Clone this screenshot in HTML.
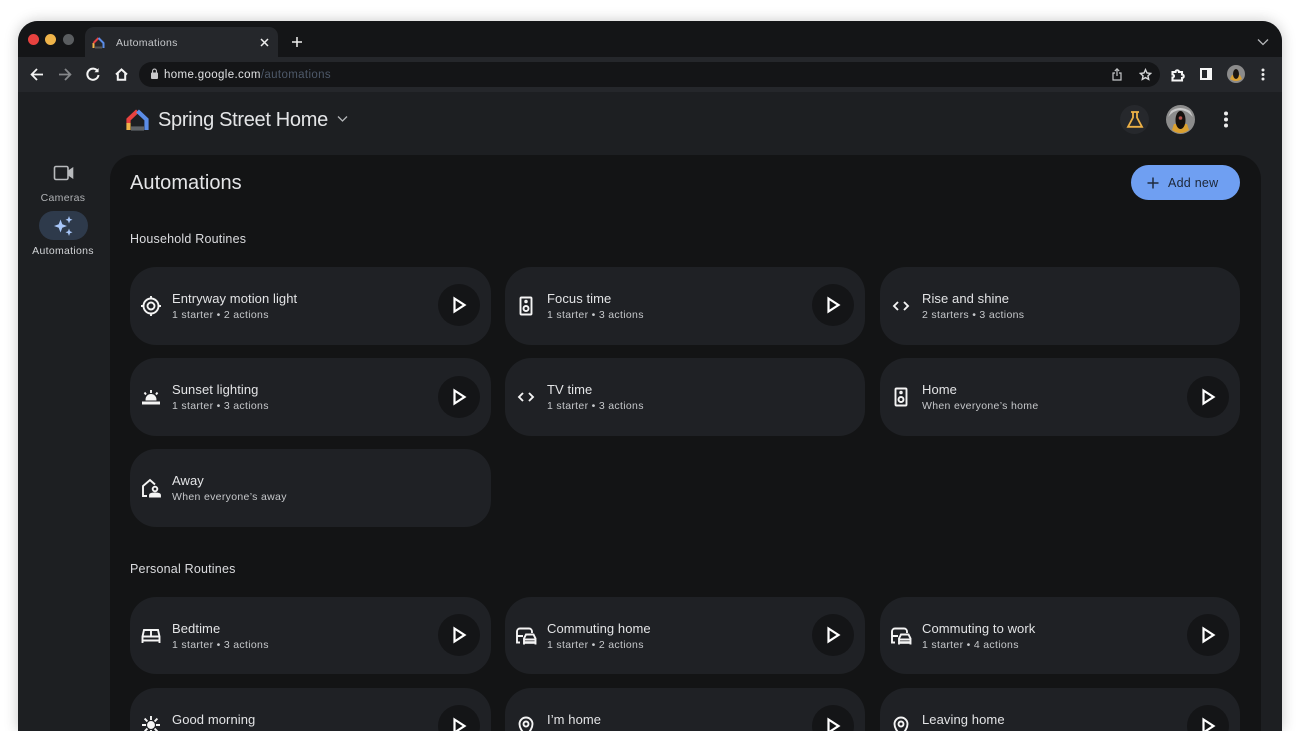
<!DOCTYPE html>
<html lang="en">
<head>
<meta charset="utf-8">
<title>Automations</title>
<style>
html,body{margin:0;padding:0;background:#fff;width:1300px;height:731px;overflow:hidden}
*{box-sizing:border-box}
body{font-family:"Liberation Sans",sans-serif;position:relative}
#root{position:absolute;left:0;top:0;width:1300px;height:731px;overflow:hidden}
.a{position:absolute}
.win{left:18px;top:21px;width:1264px;height:710px;background:#1d1f22;border-radius:20px 20px 0 0;box-shadow:0 0 14px rgba(0,0,0,.22)}
.strip{left:18px;top:21px;width:1264px;height:36px;background:#141517;border-radius:20px 20px 0 0}
.tool{left:18px;top:57px;width:1264px;height:35px;background:#25272b}
.tab{left:85px;top:27px;width:193px;height:30px;background:#25272b;border-radius:9px 9px 0 0}
.dot{width:11px;height:11px;border-radius:50%;top:34px}
.url{left:139px;top:62px;width:1021px;height:25px;background:#141517;border-radius:13px}
.panel{left:110px;top:155px;width:1151px;height:576px;background:#131415;border-radius:24px 24px 0 0}
.card{position:absolute;width:361px;background:#1f2125;border-radius:26px;overflow:hidden}
.card.cut{height:43px;border-radius:26px 26px 0 0}
.card .t{position:absolute;left:42px;font-size:13px;color:#e3e4e6;white-space:nowrap;line-height:16px;letter-spacing:.08px}
.card .s{position:absolute;left:42px;font-size:10.500px;color:#c6c8cb;white-space:nowrap;line-height:14px;letter-spacing:.32px}
.card svg.i{position:absolute;left:10px;width:22px;height:22px;fill:none;stroke:#f4f4f4;stroke-width:1.900}
.play{position:absolute;left:308px;width:42px;height:42px;border-radius:50%;background:#141517}
.play svg{position:absolute;left:11px;top:11px;width:20px;height:20px;fill:none;stroke:#fff;stroke-width:2.200}
.h{font-size:12.500px;color:#dcdde0;letter-spacing:.2px;white-space:nowrap}
svg{display:block}
</style>
</head>
<body>
<div id="root">
<div class="a win"></div>
<div class="a strip"></div>
<div class="a tool"></div>
<div class="a dot" style="left:28px;background:#e8423f"></div>
<div class="a dot" style="left:45px;background:#efb44a"></div>
<div class="a dot" style="left:63px;background:#5a5d60"></div>
<div class="a tab"></div>
<svg class="a" style="left:92px;top:36px" width="13" height="13" viewBox="0 0 13 13" fill="none" stroke-width="2"><path d="M1.500 12V7" stroke="#efb44a"/><path d="M1.500 7 6.500 2" stroke="#e8423f"/><path d="M6.500 2 11.500 7V12" stroke="#5b8de8"/><path d="M3 11.500H10" stroke="#555"/></svg>
<div class="a" style="left:116px;top:37px;font-size:10.500px;color:#c6c8cb;letter-spacing:.3px">Automations</div>
<svg class="a" style="left:259px;top:37px" width="11" height="11" viewBox="0 0 11 11" stroke="#eee" stroke-width="1.500"><path d="M2 2 9 9M9 2 2 9"/></svg>
<svg class="a" style="left:291px;top:36px" width="12" height="12" viewBox="0 0 12 12" stroke="#eee" stroke-width="1.500"><path d="M6 1V11M1 6H11"/></svg>
<svg class="a" style="left:1257px;top:38px" width="12" height="8" viewBox="0 0 12 8" fill="none" stroke="#b5b7ba" stroke-width="1.300"><path d="M1 1.500 6 6.500 11 1.500"/></svg>

<svg class="a" style="left:30px;top:68px" width="14" height="13" viewBox="0 0 14 13" fill="none" stroke="#f4f4f4" stroke-width="1.800"><path d="M13 6.500H2M7 1 1.600 6.500 7 12"/></svg>
<svg class="a" style="left:58px;top:68px" width="14" height="13" viewBox="0 0 14 13" fill="none" stroke="#85878a" stroke-width="1.800"><path d="M1 6.500H12M7 1 12.400 6.500 7 12"/></svg>
<svg class="a" style="left:86px;top:67px" width="14" height="14" viewBox="0 0 14 14" fill="none" stroke="#f4f4f4" stroke-width="2"><path d="M11.800 4.400A5.600 5.600 0 1 0 12.500 8"/><path d="M12.600 1V5.200H8.400Z" fill="#f4f4f4" stroke="none"/></svg>
<svg class="a" style="left:115px;top:68px" width="13" height="13" viewBox="0 0 13 13" fill="none" stroke="#f4f4f4" stroke-width="2"><path d="M1 6.500 6.500 1.500 12 6.500M2.800 5.500V11.800H10.200V5.500"/></svg>
<div class="a url"></div>
<svg class="a" style="left:150px;top:68px" width="9" height="12" viewBox="0 0 9 12"><rect x="1" y="4.500" width="7" height="6.500" rx="1" fill="#c8c8ca"/><path d="M2.600 5V3a1.900 1.900 0 0 1 3.800 0V5" fill="none" stroke="#c8c8ca" stroke-width="1.100"/></svg>
<div class="a" style="left:164px;top:68px;font-size:11.500px;line-height:14px;letter-spacing:.36px;color:#e1e2e4;white-space:nowrap">home.google.com<span style="color:#4d5868">/automations</span></div>
<svg class="a" style="left:1111px;top:67px" width="12" height="15" viewBox="0 0 12 15" fill="none" stroke="#c4c6c8" stroke-width="1.200"><path d="M4 6H2V13H10V6H8M6 9V2M3.800 4 6 1.800 8.200 4"/></svg>
<svg class="a" style="left:1139px;top:68px" width="13" height="13" viewBox="0 0 24 24" fill="none" stroke="#d5d6d8" stroke-width="2.600"><path d="M12 3 14.800 9.200 21.500 10 16.500 14.500 17.900 21 12 17.700 6.100 21 7.500 14.500 2.500 10 9.200 9.200Z"/></svg>
<svg class="a" style="left:1171px;top:68px" width="14" height="14" viewBox="0 0 14 14" fill="none" stroke="#f6f6f6" stroke-width="2.100"><path d="M1.500 4H4.500A1.700 1.700 0 0 1 8 4H11V6.500A1.600 1.600 0 0 1 11 10V12.500H1.500V9.500A1.500 1.500 0 0 0 1.500 6.500Z"/></svg>
<div class="a" style="left:1200px;top:68px;width:12px;height:12px;border:2px solid #f6f6f6;border-right:5px solid #f6f6f6;background:#25272b"></div>
<svg class="a" style="left:1227px;top:65px" width="18" height="18" viewBox="0 0 18 18"><circle cx="9" cy="9" r="9" fill="#8b8b8b"/><path d="M3 14Q9 18 15 14L13 10H5Z" fill="#d9a035"/><ellipse cx="9" cy="9" rx="3" ry="5" fill="#1a1410"/></svg>
<svg class="a" style="left:1261px;top:68px" width="4" height="13" viewBox="0 0 4 13" fill="#ececec"><circle cx="2" cy="2" r="1.500"/><circle cx="2" cy="6.500" r="1.500"/><circle cx="2" cy="11" r="1.500"/></svg>

<svg class="a" style="left:126px;top:108px" width="23" height="23" viewBox="0 0 23 23" fill="none" stroke-width="4.200"><path d="M2.500 22V15" stroke="#efb44a"/><path d="M2.500 15V11.500L11.500 3" stroke="#e8423f"/><path d="M11.500 3 20.500 11.500V22" stroke="#5b8de8"/><path d="M5 20.500H18" stroke="#5f6368"/></svg>
<div class="a" style="left:158px;top:108px;font-size:20px;line-height:24px;color:#e4e5e7;white-space:nowrap;letter-spacing:-.32px">Spring Street Home</div>
<svg class="a" style="left:337px;top:115px" width="11" height="8" viewBox="0 0 11 8" fill="none" stroke="#b5b7ba" stroke-width="1.300"><path d="M1 1.500 5.500 6 10 1.500"/></svg>
<div class="a" style="left:1120px;top:105px;width:29px;height:29px;border-radius:50%;background:#26282c"></div>
<svg class="a" style="left:1126px;top:110px" width="18" height="19" viewBox="0 0 18 19" fill="none" stroke="#edb146" stroke-width="1.800"><path d="M5 2H13M7 2V7.500L2 16.800H16L11 7.500V2"/></svg>
<svg class="a" style="left:1166px;top:105px" width="29" height="29" viewBox="0 0 29 29"><circle cx="14.500" cy="14.500" r="14.500" fill="#8c8c8c"/><path d="M2 12Q14 -2 27 12L24 6Q14 0 5 6Z" fill="#c9c9c9"/><path d="M6 25Q14.500 31 23 25L21 19H8Z" fill="#dba02f"/><ellipse cx="14.500" cy="15" rx="5" ry="9" fill="#15100e"/><circle cx="14.500" cy="13" r="1.800" fill="#b5524a"/></svg>
<svg class="a" style="left:1223px;top:111px" width="6" height="17" viewBox="0 0 6 17" fill="#ececec"><circle cx="3" cy="2.500" r="2"/><circle cx="3" cy="8.500" r="2"/><circle cx="3" cy="14.500" r="2"/></svg>

<svg class="a" style="left:53px;top:165px" width="21" height="16" viewBox="0 0 21 16" fill="none" stroke="#b8babd" stroke-width="1.600"><rect x="1.500" y="1.500" width="13.500" height="13" rx="1.500"/><path d="M15 6.500 19.500 3.500V12.500L15 9.500" fill="#b8babd"/></svg>
<div class="a" style="left:0;top:192px;width:126px;text-align:center;font-size:10.500px;color:#b0b2b5;letter-spacing:.3px">Cameras</div>
<div class="a" style="left:39px;top:211px;width:49px;height:29px;border-radius:15px;background:#2e3a4b"></div>
<svg class="a" style="left:53px;top:215px" width="22" height="22" viewBox="0 0 22 22" fill="#a8c7fa"><path d="M7.500 4.500 9.300 9.200 14 11 9.300 12.800 7.500 17.500 5.700 12.800 1 11 5.700 9.200Z"/><path d="M16 1 17 3.800 19.500 4.800 17 5.800 16 8.500 15 5.800 12.500 4.800 15 3.800Z"/><path d="M16 13.500 17 16.200 19.500 17.200 17 18.200 16 21 15 18.200 12.500 17.200 15 16.200Z"/></svg>
<div class="a" style="left:0;top:245px;width:126px;text-align:center;font-size:10.500px;color:#d2d4d7;letter-spacing:.3px">Automations</div>

<div class="a panel"></div>
<div class="a" style="left:130px;top:171px;font-size:20px;line-height:24px;color:#e4e5e7;letter-spacing:.05px">Automations</div>
<div class="a" style="left:1131px;top:165px;width:109px;height:35px;border-radius:18px;background:#6f9ff2"></div>
<svg class="a" style="left:1147px;top:177px" width="12" height="12" viewBox="0 0 12 12" stroke="#1e2a3c" stroke-width="1.500"><path d="M6 .5V11.500M.5 6H11.500"/></svg>
<div class="a" style="left:1168px;top:175px;font-size:12.500px;line-height:16px;color:#1c2636;letter-spacing:.25px;white-space:nowrap">Add new</div>

<div class="a h" style="left:130px;top:232px">Household Routines</div>
<div class="a h" style="left:130px;top:562px">Personal Routines</div>

<!-- Household row 1 -->
<div class="card" style="left:130px;top:267px;height:78px"><svg class="i" style="top:28px" viewBox="0 0 22 22"><circle cx="11" cy="11" r="7.500"/><circle cx="11" cy="11" r="3.500"/><path d="M11 1V4M11 18V21M1 11H4M18 11H21"/></svg><div class="t" style="top:24px">Entryway motion light</div><div class="s" style="top:41px">1 starter • 2 actions</div><div class="play" style="top:17px"><svg viewBox="0 0 20 20"><path d="M5.500 3.500 15.500 10 5.500 16.500Z"/></svg></div></div>
<div class="card" style="left:505px;top:267px;width:360px;height:78px"><svg class="i" style="top:28px" viewBox="0 0 22 22"><rect x="5.500" y="2.500" width="11" height="17" rx="1"/><circle cx="11" cy="13.500" r="2.500"/><circle cx="11" cy="6.500" r=".8"/></svg><div class="t" style="top:24px">Focus time</div><div class="s" style="top:41px">1 starter • 3 actions</div><div class="play" style="top:17px;left:307px"><svg viewBox="0 0 20 20"><path d="M5.500 3.500 15.500 10 5.500 16.500Z"/></svg></div></div>
<div class="card" style="left:880px;top:267px;width:360px;height:78px"><svg class="i" style="top:28px" viewBox="0 0 22 22"><path d="M8 7 4 11 8 15M14 7 18 11 14 15"/></svg><div class="t" style="top:24px">Rise and shine</div><div class="s" style="top:41px">2 starters • 3 actions</div></div>

<!-- Household row 2 -->
<div class="card" style="left:130px;top:358px;height:78px"><svg class="i" style="top:28px" viewBox="0 0 22 22"><path d="M2 17H20" stroke-width="3"/><path d="M6.500 13.500A4.500 4.500 0 0 1 15.500 13.500Z" fill="#f4f4f4"/><path d="M11 4V7M4.500 6.500 6 8.500M17.500 6.500 16 8.500"/></svg><div class="t" style="top:24px">Sunset lighting</div><div class="s" style="top:41px">1 starter • 3 actions</div><div class="play" style="top:18px"><svg viewBox="0 0 20 20"><path d="M5.500 3.500 15.500 10 5.500 16.500Z"/></svg></div></div>
<div class="card" style="left:505px;top:358px;width:360px;height:78px"><svg class="i" style="top:28px" viewBox="0 0 22 22"><path d="M8 7 4 11 8 15M14 7 18 11 14 15"/></svg><div class="t" style="top:24px">TV time</div><div class="s" style="top:41px">1 starter • 3 actions</div></div>
<div class="card" style="left:880px;top:358px;width:360px;height:78px"><svg class="i" style="top:28px" viewBox="0 0 22 22"><rect x="5.500" y="2.500" width="11" height="17" rx="1"/><circle cx="11" cy="13.500" r="2.500"/><circle cx="11" cy="6.500" r=".8"/></svg><div class="t" style="top:24px">Home</div><div class="s" style="top:41px">When everyone’s home</div><div class="play" style="top:18px;left:307px"><svg viewBox="0 0 20 20"><path d="M5.500 3.500 15.500 10 5.500 16.500Z"/></svg></div></div>

<!-- Household row 3 -->
<div class="card" style="left:130px;top:449px;height:78px"><svg class="i" style="top:28px" viewBox="0 0 22 22"><path d="M7 19H3V9L10 3 15 7.500"/><circle cx="15" cy="12" r="2.300"/><path d="M10 19.500V18C10 16 20 16 20 18V19.500Z" fill="#f4f4f4"/></svg><div class="t" style="top:24px">Away</div><div class="s" style="top:41px">When everyone’s away</div></div>

<!-- Personal row 1 -->
<div class="card" style="left:130px;top:597px;height:77px"><svg class="i" style="top:28px" viewBox="0 0 22 22"><path d="M2.500 18V11.500L4 5H18L19.500 11.500V18M2.500 11.500H19.500M2.500 15.500H19.500M11 6V11.500"/></svg><div class="t" style="top:24px">Bedtime</div><div class="s" style="top:41px">1 starter • 3 actions</div><div class="play" style="top:17px"><svg viewBox="0 0 20 20"><path d="M5.500 3.500 15.500 10 5.500 16.500Z"/></svg></div></div>
<div class="card" style="left:505px;top:597px;width:360px;height:77px"><svg class="i" style="top:28px" viewBox="0 0 22 22"><path d="M5 17.500H2V6.500A3 3 0 0 1 5 3.500H14A3 3 0 0 1 17 6.500V8M2 11H8"/><path d="M9 19.500V13.500L11 9.500H18.500L20.500 13.500V19.500M9 14.500H20.500"/><path d="M8.500 17.500H21" stroke-width="2.600"/></svg><div class="t" style="top:24px">Commuting home</div><div class="s" style="top:41px">1 starter • 2 actions</div><div class="play" style="top:17px;left:307px"><svg viewBox="0 0 20 20"><path d="M5.500 3.500 15.500 10 5.500 16.500Z"/></svg></div></div>
<div class="card" style="left:880px;top:597px;width:360px;height:77px"><svg class="i" style="top:28px" viewBox="0 0 22 22"><path d="M5 17.500H2V6.500A3 3 0 0 1 5 3.500H14A3 3 0 0 1 17 6.500V8M2 11H8"/><path d="M9 19.500V13.500L11 9.500H18.500L20.500 13.500V19.500M9 14.500H20.500"/><path d="M8.500 17.500H21" stroke-width="2.600"/></svg><div class="t" style="top:24px">Commuting to work</div><div class="s" style="top:41px">1 starter • 4 actions</div><div class="play" style="top:17px;left:307px"><svg viewBox="0 0 20 20"><path d="M5.500 3.500 15.500 10 5.500 16.500Z"/></svg></div></div>

<!-- Personal row 2 -->
<div class="card cut" style="left:130px;top:688px"><svg class="i" style="top:26px" viewBox="0 0 22 22"><circle cx="11" cy="11" r="3" fill="#f4f4f4"/><path d="M11 2V6M11 16V20M2 11H6M16 11H20M4.600 4.600 7.400 7.400M14.600 14.600 17.400 17.400M4.600 17.400 7.400 14.600M14.600 7.400 17.400 4.600"/></svg><div class="t" style="top:24px">Good morning</div><div class="play" style="top:17px"><svg viewBox="0 0 20 20"><path d="M5.500 3.500 15.500 10 5.500 16.500Z"/></svg></div></div>
<div class="card cut" style="left:505px;top:688px;width:360px"><svg class="i" style="top:27px" viewBox="0 0 22 22"><path d="M11 21C7 16 4.500 13 4.500 9A6.500 6.500 0 0 1 17.500 9C17.500 13 15 16 11 21Z"/><circle cx="11" cy="9" r="2.500"/></svg><div class="t" style="top:24px">I’m home</div><div class="play" style="top:17px;left:307px"><svg viewBox="0 0 20 20"><path d="M5.500 3.500 15.500 10 5.500 16.500Z"/></svg></div></div>
<div class="card cut" style="left:880px;top:688px;width:360px"><svg class="i" style="top:27px" viewBox="0 0 22 22"><path d="M11 21C7 16 4.500 13 4.500 9A6.500 6.500 0 0 1 17.500 9C17.500 13 15 16 11 21Z"/><circle cx="11" cy="9" r="2.500"/></svg><div class="t" style="top:24px">Leaving home</div><div class="play" style="top:17px;left:307px"><svg viewBox="0 0 20 20"><path d="M5.500 3.500 15.500 10 5.500 16.500Z"/></svg></div></div>
</div>
</body>
</html>
